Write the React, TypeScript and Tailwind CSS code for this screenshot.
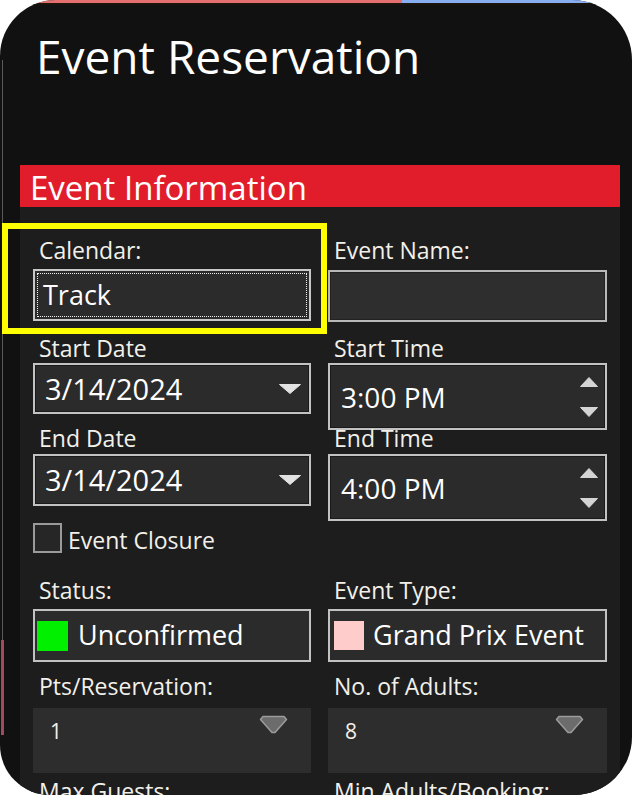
import type { ReactNode } from 'react';

function Label({ children }: { children: ReactNode }) {
  return (
    <div className="h-[24px] whitespace-nowrap pl-[6px] text-[23px] leading-[24px] text-[#f2f0ea]">
      {children}
    </div>
  );
}

function DropArrow() {
  return (
    <svg width="22" height="10" viewBox="0 0 22 10">
      <polygon points="0.5,0.5 21.5,0.5 11,9.5" fill="#e2e2e2" stroke="#e2e2e2" strokeLinejoin="round" />
    </svg>
  );
}

function Spinner() {
  return (
    <div className="flex flex-col gap-[20px]">
      <svg width="18" height="10" viewBox="0 0 18 10">
        <polygon points="0.5,9.5 17.5,9.5 9,0.5" fill="#d4d4d4" stroke="#d4d4d4" strokeLinejoin="round" />
      </svg>
      <svg width="18" height="10" viewBox="0 0 18 10">
        <polygon points="0.5,0.5 17.5,0.5 9,9.5" fill="#d4d4d4" stroke="#d4d4d4" strokeLinejoin="round" />
      </svg>
    </div>
  );
}

function Shield() {
  return (
    <svg width="29" height="19" viewBox="0 0 29 19">
      <path
        d="M4 1.5 H25 L27.5 4.5 L16 17.5 H13 L1.5 4.5 Z"
        fill="#6c6c6c"
        stroke="#9c9c9c"
        strokeWidth="1.5"
        strokeLinejoin="round"
      />
    </svg>
  );
}

function Box({ h, children }: { h: string; children?: ReactNode }) {
  return (
    <div
      className={`mt-[3px] flex items-center justify-between border-2 border-[#c2c2c2] bg-[#2b2b2b] shadow-[inset_0_0_0_1px_#1a1a1a] ${h}`}
    >
      {children}
    </div>
  );
}

function NumBox({ value }: { value: string }) {
  return (
    <div className="mt-[10px] flex h-[65px] items-start justify-between bg-[#2d2d2d] pl-[17px] pr-[23px]">
      <span className="pt-[11px] text-[21px] leading-[24px] text-[#f2f0ea]">{value}</span>
      <div className="pt-[7px]">
        <Shield />
      </div>
    </div>
  );
}

export default function App() {
  return (
    <div className="h-[795px] w-[632px] overflow-hidden bg-white font-['Open_Sans',sans-serif]">
      <div className="relative flex h-full overflow-hidden rounded-bl-[50px] rounded-br-[58px] rounded-tl-[56px] rounded-tr-[60px] bg-[#111111]">
        <div className="flex w-[4px] shrink-0 flex-col">
          <div className="h-[60px] shrink-0" />
          <div className="ml-[2px] w-[1px] flex-1 bg-[#5a5a5a]" />
          <div className="ml-[1px] h-[95px] w-[3px] shrink-0 bg-[#a04a5a]" />
          <div className="h-[60px] shrink-0" />
        </div>

        <div className="flex min-w-0 flex-1 flex-col">
          <div className="flex h-[3px] shrink-0">
            <div className="flex-1 bg-[#e46f6f]" />
            <div className="w-[230px] bg-[#86aef0]" />
          </div>
          <div className="h-[2px] shrink-0 bg-[#1a140c]" />

          <h1 className="ml-[32px] mt-[28px] h-[46px] shrink-0 whitespace-nowrap text-[46px] leading-[46px] text-white">
            Event Reservation
          </h1>

          <section className="ml-[16px] mr-[12px] mt-[86px] min-h-0 flex-1 overflow-hidden bg-[#1d1d1d]">
            <div className="h-[42px] bg-[#e11d2b] pl-[10px] pt-[3px] text-[33px] leading-[39px] text-white">
              Event Information
            </div>

            <div className="pl-[13px]">
              <div className="mt-[31px] grid grid-cols-[278px_279px] gap-x-[17px]">
                <div>
                  <Label>Calendar:</Label>
                  <div className="mt-[7px] h-[52px] border-2 border-[#c8c8c8] bg-[#2b2b2b] p-[2px]">
                    <div className="flex h-full items-center border border-dotted border-[#f0f0f0] pl-[5px] text-[27px] text-white">
                      Track
                    </div>
                  </div>
                </div>
                <div>
                  <Label>Event Name:</Label>
                  <div className="mt-[8px] h-[52px] border-2 border-[#b8b8b8] bg-[#2e2e2e] shadow-[inset_0_0_0_1px_#222]" />
                </div>
              </div>

              <div className="mt-[14px] grid grid-cols-[278px_279px] gap-x-[17px]">
                <div>
                  <Label>Start Date</Label>
                  <Box h="h-[51px] pl-[10px] pr-[8px]">
                    <span className="text-[29px] text-white">3/14/2024</span>
                    <DropArrow />
                  </Box>
                  <div className="mt-[12px]">
                    <Label>End Date</Label>
                  </div>
                  <div className="mt-[4px]">
                    <Box h="h-[52px] pl-[10px] pr-[8px]">
                      <span className="text-[29px] text-white">3/14/2024</span>
                      <DropArrow />
                    </Box>
                  </div>
                </div>
                <div>
                  <Label>Start Time</Label>
                  <Box h="h-[67px] pl-[11px] pr-[7px]">
                    <span className="text-[28px] text-white">3:00 PM</span>
                    <Spinner />
                  </Box>
                  <div className="-mt-[4px]">
                    <Label>End Time</Label>
                  </div>
                  <div className="mt-[4px]">
                    <Box h="h-[67px] pl-[11px] pr-[7px]">
                      <span className="text-[28px] text-white">4:00 PM</span>
                      <Spinner />
                    </Box>
                  </div>
                </div>
              </div>

              <div className="mt-[2px] flex h-[30px] items-center">
                <div className="h-[30px] w-[29px] border-2 border-[#9a9a9a] bg-[#262626]" />
                <span className="pl-[6px] pt-[3px] text-[23px] leading-[30px] text-[#f2f0ea]">Event Closure</span>
              </div>

              <div className="mt-[25px] grid grid-cols-[278px_279px] gap-x-[17px]">
                <div>
                  <Label>Status:</Label>
                  <div className="mt-[7px] flex h-[53px] items-center border-2 border-[#c2c2c2] bg-[#2b2b2b] pl-[2px]">
                    <div className="h-[30px] w-[31px] bg-[#00f000]" />
                    <span className="pl-[10px] text-[27px] text-white">Unconfirmed</span>
                  </div>
                  <div className="mt-[12px]">
                    <Label>Pts/Reservation:</Label>
                  </div>
                  <NumBox value="1" />
                  <div className="mt-[6px]">
                    <Label>Max Guests:</Label>
                  </div>
                </div>
                <div>
                  <Label>Event Type:</Label>
                  <div className="mt-[7px] flex h-[53px] items-center border-2 border-[#c2c2c2] bg-[#2b2b2b] pl-[4px]">
                    <div className="h-[29px] w-[30px] bg-[#ffcccc]" />
                    <span className="pl-[9px] text-[27px] text-white">Grand Prix Event</span>
                  </div>
                  <div className="mt-[12px]">
                    <Label>No. of Adults:</Label>
                  </div>
                  <NumBox value="8" />
                  <div className="mt-[6px]">
                    <Label>Min Adults/Booking:</Label>
                  </div>
                </div>
              </div>
            </div>
          </section>
        </div>

        <div className="pointer-events-none absolute left-[2px] top-[223px] h-[111px] w-[325px] border-[6px] border-[#ffff00]" />
      </div>
    </div>
  );
}
